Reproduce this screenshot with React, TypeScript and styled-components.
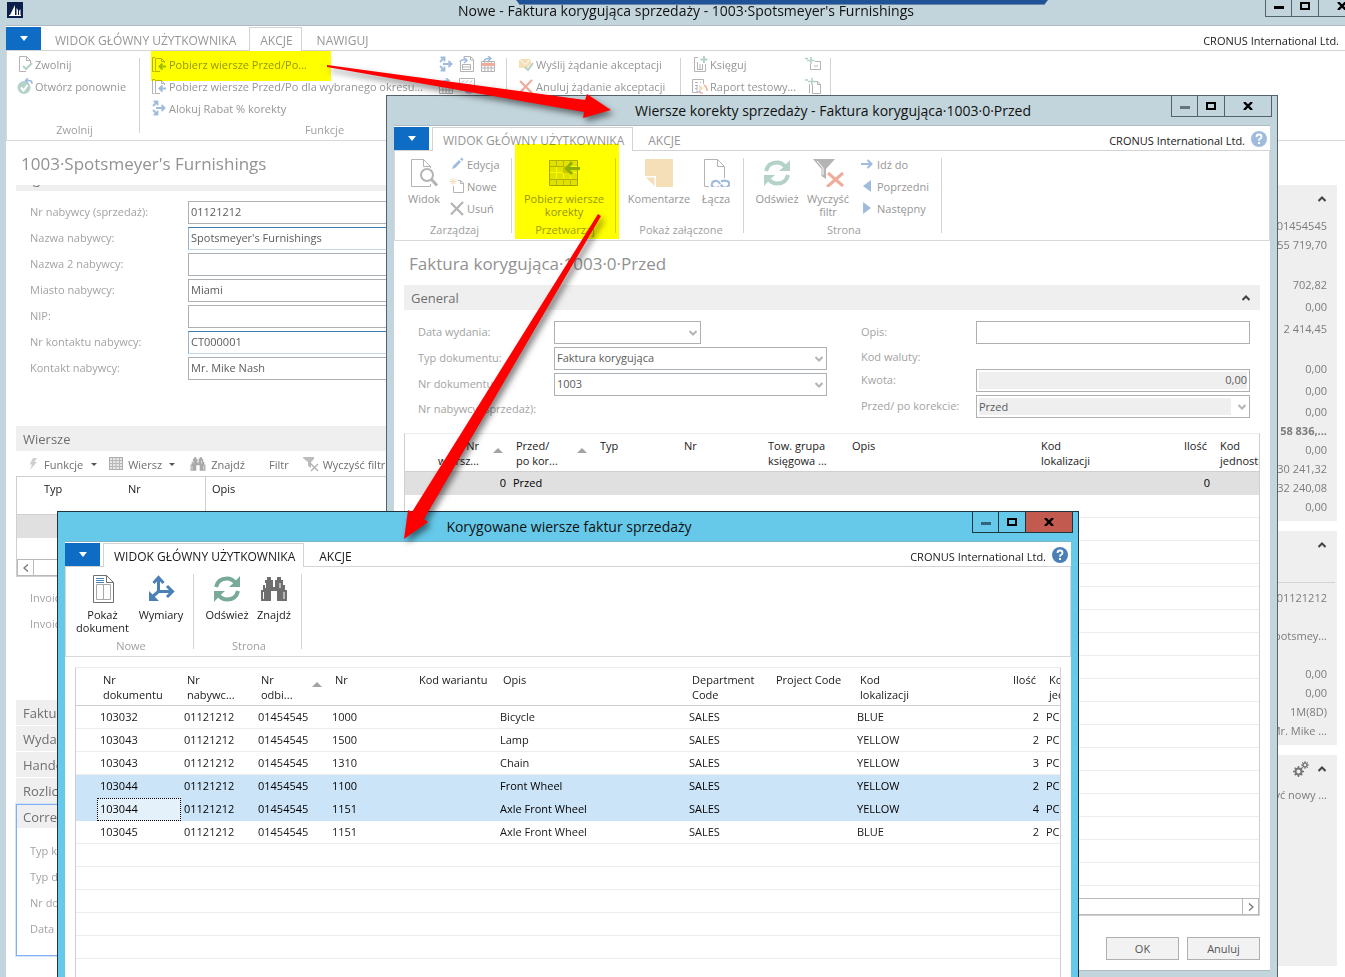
import React from 'react';
import styled, { createGlobalStyle, css } from 'styled-components';

const GlobalStyle = createGlobalStyle`
  *, *::before, *::after { box-sizing: border-box; }
  body { margin: 0; background: #fff; }
  body, button, input, select, table {
    font-family: 'Open Sans', 'Noto Sans', sans-serif;
    font-size: 11px;
    line-height: 15px;
  }
  button { background: none; border: 0; padding: 0; color: inherit; text-align: inherit; }
  h1, h2, p, ul { margin: 0; padding: 0; font-weight: 400; list-style: none; }
  svg { display: block; flex: none; }
`;

/* ---------- palette ---------- */

interface Tone {
  gray: string;
  blue: string;
  green: string;
  sand: string;
  red: string;
}
const faded: Tone = { gray: '#b4b4b4', blue: '#a0bcdc', green: '#b4d2c8', sand: '#f5dfb8', red: '#efac9b' };
const vivid: Tone = { gray: '#6f6f6f', blue: '#4a7fb8', green: '#79a998', sand: '#efc477', red: '#d9593d' };

/* ---------- icons ---------- */

type IconProps = { t?: Tone };

const S = ({ w = 16, h = w, children }: { w?: number; h?: number; children: React.ReactNode }) => (
  <svg width={w} height={h} viewBox={`0 0 ${w} ${h}`} fill="none" aria-hidden="true">
    {children}
  </svg>
);

const LogoIcon = () => (
  <S>
    <rect width="16" height="16" fill="#0b1f4b" />
    <path d="M3 13 L8 3 V13 Z" fill="#fff" />
    <path d="M9.500 13 V6 L11 8 V13 Z M12 13 V9 L13.500 7 V13 Z" fill="#fff" />
    <path d="M2 13.500 H14" stroke="#fff" />
  </S>
);

const Caret = () => (
  <S w={8} h={5}>
    <path d="M0 0 H8 L4 5 Z" fill="#fff" />
  </S>
);

const MenuCaret = () => (
  <S w={8} h={3}>
    <path d="M2 0 H8 L5 3 Z" fill="#555" />
  </S>
);

const DocCheckIcon = ({ t = faded }: IconProps) => (
  <S>
    <path d="M9 15.500 H2.500 V0.500 H9.500 L13.500 4.500 V7 M9.500 0.500 V4.500 H13.500" stroke={t.gray} />
    <path d="M6 10 L9 13 L15 7" stroke={t.green} strokeWidth="2" />
  </S>
);

const ReopenIcon = ({ t = faded }: IconProps) => (
  <S>
    <circle cx="7" cy="9.500" r="6.500" fill={t.green} />
    <path d="M4 9.500 L6.500 12.500 L10.500 7" stroke="#fff" strokeWidth="2" />
    <path d="M9 2.500 H12.500 Q15 2.500 15 6 M11 0 L8.500 2.500 L11 5" stroke={t.blue} strokeWidth="1.500" />
  </S>
);

const GetLinesIcon = ({ t = faded }: IconProps) => (
  <S>
    <path d="M3.500 15.500 H1.500 V1.500 H4" stroke={t.gray} />
    <path d="M9 15.500 H4.500 V2.500 H10.500 L13.500 5.500 V7 M10.500 2.500 V5.500 H13.500" stroke={t.gray} />
    <path d="M15 10.500 H9.500 M11.500 7.500 L8.500 10.500 L11.500 13.500" stroke={t.blue} strokeWidth="2" />
  </S>
);

const AllocateIcon = ({ t = faded }: IconProps) => (
  <S>
    <path
      d="M2.500 1.500 H6.500 V5.500 M6.500 1.500 L2 6 M5 8 H13 M10.500 5 L13.500 8 L10.500 11 M2 10 L6 14 M6.500 10.500 V14.500 H2.500"
      stroke={t.blue}
      strokeWidth="1.800"
    />
  </S>
);

const CopyDocIcon = ({ t = faded }: IconProps) => (
  <S>
    <path d="M1.500 5 V15.500 H11.500 M5 2.500 V0.500 H11.500 L14.500 3.500 V15.500 H11 M11.500 1 V4 H14" stroke={t.gray} />
    <path d="M3.500 8.500 H11.500 V13.500 H3.500 Z M4 11 H11" stroke={t.gray} />
    <path d="M1 6 Q2 3 7 4 M5 1.500 L8 4.500 L5 7" stroke={t.blue} strokeWidth="1.500" />
  </S>
);

const CalendarIcon = ({ t = faded, accent }: IconProps & { accent?: string }) => (
  <S>
    <path d="M1.500 5.500 H14.500 V15.500 H1.500 Z M4.800 6 V15 M8 6 V15 M11.200 6 V15 M2 8.500 H14 M2 12 H14" stroke={t.gray} />
    {accent && <rect x="1" y="7" width="14" height="3" fill={accent} />}
    <path d="M4 5 Q5 2 10 2.500 M8 0 L11 2.500 L8 5" stroke={t.blue} strokeWidth="1.500" />
  </S>
);

const PeriodIcon = ({ t = faded }: IconProps) => (
  <S>
    <path d="M0.500 0.500 H15.500 V12 M0.500 0.500 V12 H5 M3 4.500 L5 2.500 M7 4.500 L9 2.500 M11 4.500 L13 2.500" stroke={t.gray} />
    <circle cx="10" cy="11" r="5" fill="#c9b6dc" />
  </S>
);

const SendApprovalIcon = ({ t = faded }: IconProps) => (
  <S>
    <path d="M1 3 H13 V8 L9 12 H1 Z" fill={t.sand} />
    <path d="M1 3 L7 8.500 L13 3" stroke="#fff" />
    <path d="M7 11 L10 14 L15 7" stroke={t.green} strokeWidth="2" />
  </S>
);

const CrossIcon = ({ color = faded.gray }: { color?: string }) => (
  <S>
    <path d="M2 3 L14 15 M14 2 L2 14.500" stroke={color} strokeWidth="2.200" />
  </S>
);

const LedgerIcon = ({ t = faded }: IconProps) => (
  <S>
    <path d="M6 1.500 H2.500 V15.500 H13.500 V8 M5.500 6 V13 M8 13 V8 M10.500 8 V13 M5 13.500 H11" stroke={t.gray} />
    <path d="M12 0 V7 M8.500 3.500 H15.500" stroke={t.green} strokeWidth="2" />
  </S>
);

const TestReportIcon = ({ t = faded }: IconProps) => (
  <S>
    <path d="M6 14.500 H0.500 V1.500 H11.500 V6 M3 4.500 H6 M3 7.500 H6 M3 10.500 H5 M8 4.500 H9" stroke={t.gray} />
    <path d="M7 7 L12 10 L7 14 Z" fill={t.sand} />
    <path d="M12 7 Q15.500 9 15 13 M11 15 Q8 15.500 7 13" stroke={t.red} strokeWidth="1.400" />
    <path d="M5 8 V14 H9" stroke={t.blue} />
  </S>
);

const PostSendIcon = ({ t = faded }: IconProps) => (
  <S>
    <path d="M5.500 8 V13.500 H15.500 V5.500 H10 M9 10 H13" stroke={t.gray} />
    <path d="M6 1 V8 M2 4.500 H9.500 M0 2.500 H3" stroke={t.green} strokeWidth="1.600" />
  </S>
);

const PostNewIcon = ({ t = faded }: IconProps) => (
  <S>
    <path d="M4.500 6 V15 M7.500 7 V15.500 H15.500 V6 L12.500 3.500 H10 M12.500 4 V6.500 H15" stroke={t.gray} />
    <path d="M7 0 V7 M3 3.500 H10.500 M0 2 H3" stroke={t.green} strokeWidth="1.600" />
  </S>
);

const ViewIcon = ({ t = faded }: IconProps) => (
  <S w={28}>
    <path d="M20.500 25 V27.500 H1.500 V0.500 H13.500 L20.500 7.500 V9 M13.500 0.500 V7.500 H20.500" stroke={t.gray} />
    <circle cx="17" cy="16" r="6" stroke={t.gray} strokeWidth="2" />
    <path d="M21 20 L27 26.500" stroke={t.gray} strokeWidth="3" />
  </S>
);

const PencilIcon = ({ t = faded }: IconProps) => (
  <S>
    <path d="M3 13 L4 10 L10 4 L12 6 L6 12 Z M11 3 L12.500 1.500 L14.500 3.500 L13 5 Z" fill={t.blue} />
  </S>
);

const NewIcon = ({ t = faded }: IconProps) => (
  <S>
    <path d="M4.500 8 V14.500 H14.500 V5 L11.500 2.500 H9 M11.500 3 V5.500 H14" stroke={t.gray} />
    <path d="M4 0 V7 M0.500 3.500 H7.500 M1.500 1 L6.500 6 M6.500 1 L1.500 6" stroke={t.sand} />
  </S>
);

const GetCorrectionIcon = () => (
  <S w={32} h={28}>
    <path d="M1.500 1.500 H29.500 V26.500 H1.500 Z" fill="#e2e2e2" stroke="#a4a4a4" />
    <path d="M8.500 2 V26 M15.500 2 V26 M22.500 2 V26 M2 7.500 H29 M2 13.500 H29 M2 20.500 H29" stroke="#fbfbfb" />
    <path d="M1.500 1.500 H29.500 M1.500 7.500 H16 M22.500 2 V7 M15.500 2 V7 M8.500 2 V7 M1.500 20.500 H29 M8.500 21 V26 M15.500 21 V26 M22.500 21 V26" stroke="#b4b4b4" />
    <path d="M15 7 H22 L18 10 L22 14 H15 Z" fill="#c9c9c9" />
    <path d="M32 9.500 H19 M24 3.500 L18.500 9.500 L24 15" stroke="#8fb0a4" strokeWidth="3" />
  </S>
);

const NoteIcon = ({ t = faded }: IconProps) => (
  <S w={28}>
    <path d="M0 0 H28 V28 H11 V17 H0 Z" fill={t.sand} />
    <path d="M1 18.500 H9.500 V27 Z" fill={t.sand} />
  </S>
);

const LinksIcon = ({ t = faded }: IconProps) => (
  <S w={28}>
    <path d="M7 27.500 H2.500 V0.500 H15.500 L22.500 7.500 V19 M15.500 0.500 V7.500 H22.500" stroke={t.gray} />
    <path
      d="M17 27.500 Q15 30 12 28.500 Q9 27.500 10 24.500 Q11 21.500 15 22 Q17 22.500 18 25 M19 22.500 Q22 21 25 22 Q28 23 27 26 Q26 29 22 28.500 Q20 28 19 25.500"
      stroke={t.blue}
      strokeWidth="2.200"
    />
  </S>
);

const RefreshIcon = ({ t = faded }: IconProps) => (
  <S w={28}>
    <path d="M3 12 Q5 3.500 14 3.500 Q19 3.500 22.500 8" stroke={t.green} strokeWidth="4" />
    <path d="M27 1 V12 H16 L20.500 8 Z" fill={t.green} />
    <path d="M25 16 Q23 24.500 14 24.500 Q9 24.500 5.500 20" stroke={t.green} strokeWidth="4" />
    <path d="M1 27 V16 H12 L7.500 20 Z" fill={t.green} />
  </S>
);

const ClearFilterIcon = ({ t = faded }: IconProps) => (
  <S w={32} h={28}>
    <path d="M1 0 H23 L14 10 V20 L9.500 17 V10 Z" fill={t.gray} />
    <path d="M5 2 L11 9 V16" stroke="#fff" />
    <path d="M16 14 L31 27 M31 14 L15 28" stroke={t.red} strokeWidth="3" />
  </S>
);

const ArrowRightIcon = ({ t = faded }: IconProps) => (
  <S>
    <path d="M2 8 H12 M8.500 4 L12.500 8 L8.500 12" stroke={t.blue} strokeWidth="2" />
  </S>
);
const PreviousIcon = ({ t = faded }: IconProps) => (
  <S>
    <path d="M12 2 V14 L4 8 Z" fill={t.blue} />
  </S>
);
const NextIcon = ({ t = faded }: IconProps) => (
  <S>
    <path d="M4 2 V14 L12 8 Z" fill={t.blue} />
  </S>
);

const ShowDocIcon = ({ t = vivid }: IconProps) => (
  <S w={24} h={28}>
    <path d="M2.500 0.500 H15.500 L22.500 7.500 V27.500 H2.500 Z M15.500 0.500 V7.500 H22.500" stroke={t.gray} />
    <path d="M5.500 9.500 H19.500 V24.500 H5.500 Z M12.500 10 V24" stroke="#a8a8a8" />
    <path d="M5 3.500 H13 M5 5.500 H13 M5 7.500 H13" stroke={t.blue} />
  </S>
);

const DimensionsIcon = ({ t = vivid }: IconProps) => (
  <S w={28}>
    <path d="M11.500 17 V4 M6.500 8 L11.500 2.500 L16.500 8 M11 16.500 H25 M20 11 L25.500 16.500 L20 22 M12 16 L4 23" stroke={t.blue} strokeWidth="3" />
    <path d="M2 16 V26 H12 Z" fill={t.blue} />
  </S>
);

const BinocularsIcon = ({ size = 28, color = vivid.gray }: { size?: number; color?: string }) => (
  <svg width={size} height={size} viewBox="0 0 28 28" aria-hidden="true">
    <path
      d="M7 2 H11 V5 H13 V12 H15 V5 H17 V2 H21 V5 H23 V10 H25 V15 H27 V26 H17 V16 H11 V26 H1 V15 H3 V10 H5 V5 H7 Z"
      fill={color}
    />
    <path d="M5.500 8 V13 M3.500 17 V24 M20 8 V13 M24 17 V24" stroke="#fff" strokeWidth="1" />
  </svg>
);

const HelpIcon = ({ color }: { color: string }) => (
  <S>
    <circle cx="8" cy="8" r="8" fill={color} />
    <path d="M5.500 6 Q5.500 3.500 8 3.500 Q10.500 3.500 10.500 5.700 Q10.500 7 9 7.800 Q8 8.400 8 9.800" stroke="#fff" strokeWidth="1.800" />
    <rect x="7" y="11" width="2" height="2" fill="#fff" />
  </S>
);

const BoltIcon = () => (
  <S w={10} h={14}>
    <path d="M5 1 H9 L6.500 5 H9 L2 13 L4 7.500 H1.500 Z" fill="#cfcfcf" />
  </S>
);

const GridIcon = () => (
  <S w={14}>
    <rect x="0.500" y="0.500" width="13" height="12" fill="#e6e6e6" stroke="#adadad" />
    <path d="M3.500 1 V12 M7 1 V12 M10.500 1 V12 M1 3.500 H13 M1 6.500 H13 M1 9.500 H13" stroke="#b8b8b8" />
  </S>
);

const FilterClearSmallIcon = () => (
  <S>
    <path d="M0 1 H11 V3 L8 6 V12 L5 10 V6 L0 2 Z" fill="#bcbcbc" />
    <path d="M7 7 L15 15 M15 8 L8 15" stroke="#b0b0b0" strokeWidth="1.400" />
  </S>
);

const ChevronUpIcon = () => (
  <S w={8} h={6}>
    <path d="M0.500 5 L4 1.500 L7.500 5" stroke="#444" strokeWidth="2" />
  </S>
);
const ChevronDownIcon = () => (
  <S w={8} h={6}>
    <path d="M0.500 1 L4 4.500 L7.500 1" stroke="#b5b5b5" strokeWidth="2" />
  </S>
);
const ScrollArrow = ({ left }: { left?: boolean }) => (
  <S w={6} h={8}>
    <path d={left ? 'M5 0.500 L1 4 L5 7.500' : 'M1 0.500 L5 4 L1 7.500'} stroke="#777" strokeWidth="1.300" />
  </S>
);
const SortIcon = () => (
  <S w={10} h={5}>
    <path d="M0 5 L5 0 L10 5 Z" fill="#a3a3a3" />
  </S>
);

const GearsIcon = () => (
  <S w={16}>
    <circle cx="5.500" cy="10.500" r="3" stroke="#777" strokeWidth="2" />
    <path d="M5.500 5 V8 M5.500 13 V16 M0 10.500 H3 M8 10.500 H11 M1.700 6.700 L3.500 8.500 M7.500 12.500 L9.300 14.300 M9.300 6.700 L7.500 8.500 M3.500 12.500 L1.700 14.300" stroke="#777" strokeWidth="1.500" />
    <circle cx="12" cy="4" r="2" stroke="#777" strokeWidth="1.500" />
    <path d="M12 0 V2 M12 6 V8 M8 4 H10 M14 4 H16 M9.200 1.200 L10.500 2.500 M13.500 5.500 L14.800 6.800 M14.800 1.200 L13.500 2.500 M10.500 5.500 L9.200 6.800" stroke="#777" />
  </S>
);

/* ---------- window chrome ---------- */

const Desktop = styled.div`
  position: relative;
  height: 100vh;
  overflow: hidden;
  background: #fff;
`;

const WindowFrame = styled.section<{ $active?: boolean; $top: number; $left: number; $right: number; $bottom: number }>`
  position: absolute;
  top: ${(p) => p.$top}px;
  left: ${(p) => p.$left}px;
  right: ${(p) => p.$right}px;
  bottom: ${(p) => p.$bottom}px;
  display: flex;
  flex-direction: column;
  padding: 0 7px 7px;
  border: 1px solid ${(p) => (p.$active ? '#1d3540' : '#56626a')};
  background: ${(p) => (p.$active ? '#66c9ea' : '#c3d5dc')};
  color: ${(p) => (p.$active ? '#1a1a1a' : '#969696')};
`;

const TitleBar = styled.header`
  display: grid;
  grid-template-columns: 102px 1fr 102px;
  flex: none;
  height: 29px;
  margin-right: -2px;
`;

const TitleLogo = styled.span`
  padding: 6px 0 0 1px;
`;

const WindowTitle = styled.h1`
  grid-column: 2;
  font-size: 14px;
  line-height: 30px;
  color: #111;
  text-align: center;
  white-space: nowrap;
`;

const WindowControls = styled.div`
  display: flex;
  justify-content: flex-end;
  height: 21px;
`;

const ControlButton = styled.button<{ $active?: boolean; $close?: boolean }>`
  display: flex;
  align-items: center;
  justify-content: center;
  width: ${(p) => (p.$close ? 47 : 27)}px;
  border: 1px solid ${(p) => (p.$active ? '#1d3540' : '#56626a')};
  border-top: 0;
  background: ${(p) => (p.$active && p.$close ? '#c25a50' : 'transparent')};
  & + & { border-left: 0; }
`;

const WindowBody = styled.div<{ $active?: boolean }>`
  display: flex;
  flex: 1;
  flex-direction: column;
  min-height: 0;
  border-top: 1px solid ${(p) => (p.$active ? '#7fb4c6' : '#aebbc1')};
  background: #fff;
`;

const TabStrip = styled.nav`
  display: flex;
  flex: none;
  gap: 4px;
  height: 25px;
  padding: 1px 3px 0 0;
  box-shadow: inset 0 -1px #d3d3d3;
`;

const AppMenuButton = styled.button`
  display: flex;
  align-items: center;
  justify-content: center;
  width: 35px;
  height: 23px;
  margin-right: -1px;
  background: #0f6cc5;
`;

const Tab = styled.button<{ $selected?: boolean }>`
  padding: 2px 8px 0 10px;
  border: 1px solid transparent;
  border-bottom: 0;
  font-size: 12px;
  white-space: nowrap;
  ${(p) => p.$selected && css`
    border-color: #d3d3d3;
    background: #fff;
  `}
`;

const Company = styled.span`
  display: flex;
  gap: 6px;
  margin-left: auto;
  padding-top: 4px;
  line-height: 20px;
  color: #1a1a1a;
  white-space: nowrap;
`;

const Ribbon = styled.div`
  display: flex;
  flex: none;
  height: 90px;
  border: 1px solid #d8d8d8;
  border-top: 0;
`;

const RibbonSeparator = styled.span`
  width: 1px;
  margin: 7px 0;
  background: #d3d3d3;
`;

const RibbonGroupBox = styled.div<{ $width: number }>`
  display: flex;
  flex-direction: column;
  width: ${(p) => p.$width}px;
`;

const RibbonItems = styled.div`
  display: flex;
  gap: 2px;
  height: 71px;
  padding: 2px 0 0 9px;
`;

const RibbonCaption = styled.span`
  padding-left: 3px;
  line-height: 16px;
  color: #a0a0a0;
  text-align: center;
`;

const RibbonColumn = styled.div<{ $width?: number; $indent?: number }>`
  width: ${(p) => (p.$width ? `${p.$width}px` : 'auto')};
  margin-left: ${(p) => p.$indent ?? 0}px;
`;

const RibbonRow = styled.div`
  display: flex;
  gap: 5px;
`;

const SmallButton = styled.button`
  display: flex;
  align-items: center;
  gap: 2px;
  height: 22px;
  white-space: nowrap;
`;

const LargeButton = styled.button<{ $width: number }>`
  display: flex;
  flex-direction: column;
  align-items: center;
  gap: 5px;
  width: ${(p) => p.$width}px;
  padding-top: 6px;
  line-height: 13px;
  text-align: center;
`;

interface WindowProps {
  title: string;
  active?: boolean;
  logo?: boolean;
  top: number;
  left: number;
  right: number;
  bottom: number;
  tabs: string[];
  selected: number;
  ribbon: React.ReactNode;
  children: React.ReactNode;
}

const Window = ({ title, active, logo, top, left, right, bottom, tabs, selected, ribbon, children }: WindowProps) => (
  <WindowFrame $active={active} $top={top} $left={left} $right={right} $bottom={bottom} aria-label={title}>
    <TitleBar>
      {logo && <TitleLogo><LogoIcon /></TitleLogo>}
      <WindowTitle>{title}</WindowTitle>
      <WindowControls>
        <ControlButton $active={active} aria-label="Minimalizuj">
          <S w={10} h={8}><rect y="4" width="10" height="3" fill={logo ? '#000' : active ? '#33667a' : '#69747a'} /></S>
        </ControlButton>
        <ControlButton $active={active} aria-label="Maksymalizuj">
          <S w={10} h={8}><rect x="1" y="1" width="8" height="6" stroke="#000" strokeWidth="2" /></S>
        </ControlButton>
        <ControlButton $active={active} $close aria-label="Zamknij">
          <S w={10} h={8}><path d="M1 0 L9 8 M9 0 L1 8" stroke="#000" strokeWidth="2.400" /></S>
        </ControlButton>
      </WindowControls>
    </TitleBar>
    <WindowBody $active={active}>
      <TabStrip>
        <AppMenuButton aria-label="Menu aplikacji"><Caret /></AppMenuButton>
        {tabs.map((tab, i) => (
          <Tab key={tab} $selected={i === selected}>{tab}</Tab>
        ))}
        <Company>
          CRONUS International Ltd.
          <HelpIcon color={active ? vivid.blue : faded.blue} />
        </Company>
      </TabStrip>
      <Ribbon>{ribbon}</Ribbon>
      {children}
    </WindowBody>
  </WindowFrame>
);

const RibbonGroup = ({ caption, width, children }: { caption: string; width: number; children: React.ReactNode }) => (
  <>
    <RibbonGroupBox $width={width}>
      <RibbonItems>{children}</RibbonItems>
      <RibbonCaption>{caption}</RibbonCaption>
    </RibbonGroupBox>
    <RibbonSeparator />
  </>
);

/* ---------- page parts ---------- */

const PageTitle = styled.h2`
  padding: 11px 0 9px 5px;
  font-size: 17px;
  line-height: 24px;
  color: #929292;
  white-space: nowrap;
`;

const SectionBar = styled.h2`
  display: flex;
  align-items: center;
  justify-content: space-between;
  flex: none;
  height: 25px;
  padding: 1px 10px 0 7px;
  background: #efefef;
  font-size: 13px;
  color: #6f6f6f;
  white-space: nowrap;
`;

const FieldList = styled.div<{ $label: number }>`
  display: grid;
  grid-template-columns: ${(p) => p.$label}px minmax(0, 1fr);
  row-gap: 3px;
  align-content: start;
`;

const FieldLabel = styled.label<{ $plain?: boolean }>`
  height: ${(p) => (p.$plain ? 19 : 23)}px;
  line-height: ${(p) => (p.$plain ? 20 : 22)}px;
  color: #a3a3a3;
  white-space: nowrap;
`;

const fieldBox = css`
  width: 100%;
  height: 23px;
  padding: 1px 2px 3px;
  border: 1px solid #adb1b3;
  border-radius: 0;
  background: #fff;
  color: #5c5c5c;
  outline: 0;
`;

const TextBox = styled.input<{ $lookup?: boolean }>`
  ${fieldBox}
  ${(p) => p.$lookup && css`border-color: #3f7cae #c5d9e8 #c5d9e8 #8fb4d3;`}
  &:read-only {
    background: #efefef;
    box-shadow: inset 0 0 0 2px #fff;
    text-align: right;
  }
`;

const SelectWrap = styled.span<{ $width?: number }>`
  display: grid;
  width: ${(p) => (p.$width ? `${p.$width}px` : '100%')};
  > * { grid-area: 1 / 1; }
  > svg { align-self: center; justify-self: end; margin-right: 4px; pointer-events: none; }
`;

const SelectBox = styled.select`
  ${fieldBox}
  appearance: none;
  opacity: 1;
  &:disabled {
    padding: 2px 18px 2px 2px;
    background: #efefef content-box;
    background-clip: content-box;
  }
`;

const GridFrame = styled.div`
  display: flex;
  flex: 1;
  flex-direction: column;
  min-height: 0;
  overflow: hidden;
  border: 1px solid #cfcfcf;
  border-top-color: #ececec;
`;

const GridTable = styled.table`
  width: 100%;
  table-layout: fixed;
  border-collapse: separate;
  border-spacing: 0;
  color: #1a1a1a;
`;

const HeadCell = styled.th<{ $num?: boolean; $ruled?: boolean }>`
  height: 38px;
  padding: 4px 0 3px 6px;
  overflow: hidden;
  border-bottom: 1px solid #cfcfcf;
  ${(p) => p.$ruled && 'border-right: 1px solid #cfcfcf;'}
  font-weight: 400;
  text-align: ${(p) => (p.$num ? 'right' : 'left')};
  padding-right: ${(p) => (p.$num ? 7 : 0)}px;
  vertical-align: top;
  white-space: nowrap;
`;

const SortedHead = styled.span<{ $num?: boolean }>`
  display: flex;
  align-items: center;
  justify-content: ${(p) => (p.$num ? 'flex-end' : 'space-between')};
  gap: 14px;
  margin-right: ${(p) => (p.$num ? 0 : 7)}px;
  svg { margin-bottom: 6px; }
`;

const Row = styled.tr<{ $tone?: 'selected' | 'current' }>`
  background: ${(p) => (p.$tone === 'selected' ? '#cce4f7' : p.$tone === 'current' ? '#e0e0e0' : '#fff')};
  td { ${(p) => p.$tone && 'border-bottom-color: transparent; color: #000;'} }
`;

const Cell = styled.td<{ $num?: boolean; $focus?: boolean }>`
  height: 23px;
  padding: 0 3px;
  overflow: hidden;
  border-bottom: 1px solid #ececec;
  line-height: 20px;
  text-align: ${(p) => (p.$num ? 'right' : 'left')};
  padding-right: ${(p) => (p.$num ? 4 : 0)}px;
  white-space: nowrap;
  ${(p) => p.$focus && css`
    background: #e5f1fa;
    outline: 1px dotted #000;
    outline-offset: -1px;
  `}
`;

const EmptyRows = styled.div`
  flex: 1;
  background: repeating-linear-gradient(#fff 0 22px, #ececec 22px 23px);
`;

const ScrollBar = styled.div<{ $end?: boolean }>`
  display: flex;
  justify-content: ${(p) => (p.$end ? 'flex-end' : 'flex-start')};
  flex: none;
  height: 17px;
  border: 1px solid #b9b9b9;
  background: #fff;
`;

const ScrollButton = styled.button<{ $end?: boolean }>`
  display: flex;
  align-items: center;
  justify-content: center;
  width: 16px;
  border: solid #b9b9b9;
  border-width: ${(p) => (p.$end ? '0 0 0 1px' : '0 1px 0 0')};
`;

/* ---------- main window ---------- */

const MainContent = styled.div`
  display: flex;
  flex: 1;
  gap: 10px;
  min-height: 0;
  padding: 0 27px 0 10px;
`;

const FormPane = styled.div`
  flex: 1;
  min-width: 0;
`;

const ScrolledBar = styled.div`
  display: flex;
  flex-direction: column;
  justify-content: flex-end;
  height: 6px;
  overflow: hidden;
`;

const MainFields = styled.div<{ $top: number; $bottom: number }>`
  padding: ${(p) => p.$top}px 14px ${(p) => p.$bottom}px;
`;

const LineToolbar = styled.div`
  display: flex;
  align-items: center;
  height: 25px;
  padding: 1px 0 0 12px;
  color: #6f6f6f;
`;

const ToolButton = styled.button<{ $after: number; $gap?: number }>`
  display: flex;
  align-items: center;
  gap: ${(p) => p.$gap ?? 6}px;
  margin-right: ${(p) => p.$after}px;
  white-space: nowrap;
`;

const LinesFrame = styled.div`
  margin-bottom: 10px;
  border: 1px solid #cfcfcf;
`;

const BlankLine = styled.div`
  height: 21px;
`;

const FastTabs = styled.div`
  display: grid;
  gap: 1px;
  margin-bottom: 1px;
`;

const FocusedTab = styled.div`
  border: 1px solid #7fb0f5;
  box-shadow: 0 0 0 1px #d3e4fb;
  ${SectionBar} { height: 23px; padding-left: 6px; }
  ${MainFields} { padding-left: 13px; }
`;

const FactPane = styled.aside`
  display: grid;
  flex: none;
  align-content: start;
  gap: 10px;
  width: 200px;
  padding-top: 44px;
`;

const FactBox = styled.section<{ $height: number }>`
  min-height: ${(p) => p.$height}px;
  padding-right: 10px;
  background: #efefef;
  color: #7c7c7c;
`;

const FactHead = styled.header<{ $height: number; $ruled?: boolean }>`
  display: flex;
  align-items: flex-start;
  justify-content: flex-end;
  gap: 9px;
  height: ${(p) => p.$height}px;
  padding: 5px 1px 0 0;
  margin-right: ${(p) => (p.$ruled ? -8 : 0)}px;
  ${(p) => p.$ruled && css`padding-right: 9px; border-bottom: 1px solid #d3d3d3; margin-bottom: 5px;`}
  button { display: flex; align-items: center; height: 17px; }
`;

const FactRow = styled.li<{ $tall?: boolean; $bold?: boolean }>`
  height: ${(p) => (p.$tall ? 22 : 19)}px;
  line-height: ${(p) => (p.$tall ? 22 : 19)}px;
  font-weight: ${(p) => (p.$bold ? 700 : 400)};
  text-align: right;
  white-space: nowrap;
`;

const FactGap = styled.li<{ $height: number }>`
  height: ${(p) => p.$height}px;
`;

const customerFields: { label: string; value: string; lookup?: boolean }[] = [
  { label: 'Nr nabywcy (sprzedaż):', value: '01121212' },
  { label: 'Nazwa nabywcy:', value: "Spotsmeyer's Furnishings", lookup: true },
  { label: 'Nazwa 2 nabywcy:', value: '' },
  { label: 'Miasto nabywcy:', value: 'Miami' },
  { label: 'NIP:', value: '' },
  { label: 'Nr kontaktu nabywcy:', value: 'CT000001', lookup: true },
  { label: 'Kontakt nabywcy:', value: 'Mr. Mike Nash' },
];

const Fields = ({ items, prefix, label }: { items: { label: string; value: string; lookup?: boolean }[]; prefix: string; label: number }) => (
  <FieldList $label={label}>
    {items.map((f, i) => (
      <React.Fragment key={f.label + i}>
        <FieldLabel htmlFor={`${prefix}${i}`}>{f.label}</FieldLabel>
        <TextBox id={`${prefix}${i}`} defaultValue={f.value} $lookup={f.lookup} />
      </React.Fragment>
    ))}
  </FieldList>
);

const blank = (labels: string[]) => labels.map((label) => ({ label, value: '' }));

const MainWindow = () => (
  <Window
    logo
    title="Nowe - Faktura korygująca sprzedaży - 1003·Spotsmeyer's Furnishings"
    top={-5}
    left={-2}
    right={-27}
    bottom={-30}
    tabs={['WIDOK GŁÓWNY UŻYTKOWNIKA', 'AKCJE', 'NAWIGUJ']}
    selected={1}
    ribbon={
      <>
        <RibbonGroup caption="Zwolnij" width={132}>
          <RibbonColumn $indent={1}>
            <SmallButton><DocCheckIcon />Zwolnij</SmallButton>
            <SmallButton><ReopenIcon />Otwórz ponownie</SmallButton>
          </RibbonColumn>
        </RibbonGroup>
        <RibbonGroup caption="Funkcje" width={366}>
          <RibbonColumn $width={285} $indent={2}>
            <SmallButton><GetLinesIcon />Pobierz wiersze Przed/Po...</SmallButton>
            <SmallButton><GetLinesIcon />Pobierz wiersze Przed/Po dla wybranego okresu...</SmallButton>
            <SmallButton><AllocateIcon />Alokuj Rabat % korekty</SmallButton>
          </RibbonColumn>
          <RibbonColumn>
            <RibbonRow>
              <SmallButton aria-label="Alokuj"><AllocateIcon /></SmallButton>
              <SmallButton aria-label="Kopiuj dokument"><CopyDocIcon /></SmallButton>
              <SmallButton aria-label="Kalendarz"><CalendarIcon accent={faded.red} /></SmallButton>
            </RibbonRow>
            <RibbonRow>
              <SmallButton aria-label="Harmonogram"><CalendarIcon /></SmallButton>
              <SmallButton aria-label="Okres"><PeriodIcon /></SmallButton>
            </RibbonRow>
          </RibbonColumn>
        </RibbonGroup>
        <RibbonGroup caption="Akceptacja" width={173}>
          <RibbonColumn $indent={2}>
            <SmallButton><SendApprovalIcon />Wyślij żądanie akceptacji</SmallButton>
            <SmallButton><CrossIcon color={faded.red} />Anuluj żądanie akceptacji</SmallButton>
          </RibbonColumn>
        </RibbonGroup>
        <RibbonGroup caption="Księgowanie" width={149}>
          <RibbonColumn $width={111} $indent={2}>
            <SmallButton><LedgerIcon />Księguj</SmallButton>
            <SmallButton><TestReportIcon />Raport testowy...</SmallButton>
          </RibbonColumn>
          <RibbonColumn>
            <SmallButton aria-label="Księguj i wyślij"><PostSendIcon /></SmallButton>
            <SmallButton aria-label="Księguj i nowy"><PostNewIcon /></SmallButton>
          </RibbonColumn>
        </RibbonGroup>
      </>
    }
  >
    <MainContent>
      <FormPane>
        <PageTitle>1003·Spotsmeyer's Furnishings</PageTitle>
        <ScrolledBar><SectionBar>Ogólne</SectionBar></ScrolledBar>
        <MainFields $top={10} $bottom={46}>
          <Fields items={customerFields} prefix="customer" label={158} />
        </MainFields>
        <SectionBar>Wiersze</SectionBar>
        <LineToolbar>
          <ToolButton $after={12}><BoltIcon />Funkcje<MenuCaret /></ToolButton>
          <ToolButton $after={15} $gap={5}><GridIcon />Wiersz<MenuCaret /></ToolButton>
          <ToolButton $after={24} $gap={5}><BinocularsIcon size={16} color="#a9a9a9" />Znajdź</ToolButton>
          <ToolButton $after={14}>Filtr</ToolButton>
          <ToolButton $after={0} $gap={4}><FilterClearSmallIcon />Wyczyść filtr</ToolButton>
        </LineToolbar>
        <LinesFrame>
          <GridTable>
            <colgroup><col width="21" /><col width="84" /><col width="84" /><col /></colgroup>
            <thead>
              <tr><HeadCell /><HeadCell>Typ</HeadCell><HeadCell $ruled>Nr</HeadCell><HeadCell>Opis</HeadCell></tr>
            </thead>
            <tbody>
              <Row $tone="current"><Cell /><Cell /><Cell /><Cell /></Row>
            </tbody>
          </GridTable>
          <BlankLine />
          <ScrollBar><ScrollButton aria-label="Przewiń w lewo"><ScrollArrow left /></ScrollButton></ScrollBar>
        </LinesFrame>
        <MainFields $top={0} $bottom={64}>
          <Fields items={blank(['Invoice Discount:', 'Invoice Total:'])} prefix="invoice" label={158} />
        </MainFields>
        <FastTabs>
          {['Fakturowanie', 'Wydanie', 'Handel zagraniczny', 'Rozliczenie'].map((name) => (
            <SectionBar key={name}>{name}</SectionBar>
          ))}
        </FastTabs>
        <FocusedTab>
          <SectionBar>Correction</SectionBar>
          <MainFields $top={12} $bottom={14}>
            <Fields items={blank(['Typ korekty:', 'Typ dokumentu:', 'Nr dokumentu:', 'Data wydania:'])} prefix="correction" label={158} />
          </MainFields>
        </FocusedTab>
      </FormPane>
      <FactPane>
        <FactBox $height={336}>
          <FactHead $height={31}><button aria-label="Zwiń"><ChevronUpIcon /></button></FactHead>
          <ul>
            <FactRow>01454545</FactRow>
            <FactRow>255 719,70</FactRow>
            <FactGap $height={20} />
            <FactRow $tall>702,82</FactRow>
            <FactRow $tall>0,00</FactRow>
            <FactRow $tall>2 414,45</FactRow>
            <FactGap $height={18} />
            <FactRow $tall>0,00</FactRow>
            <FactRow $tall>0,00</FactRow>
            <FactRow>0,00</FactRow>
            <FactRow $bold>58 836,...</FactRow>
            <FactRow>0,00</FactRow>
            <FactRow>230 241,32</FactRow>
            <FactRow>32 240,08</FactRow>
            <FactRow>0,00</FactRow>
          </ul>
        </FactBox>
        <FactBox $height={214}>
          <FactHead $height={52} $ruled><button aria-label="Zwiń"><ChevronUpIcon /></button></FactHead>
          <ul>
            <FactRow>01121212</FactRow>
            <FactGap $height={19} />
            <FactRow>Spotsmey...</FactRow>
            <FactGap $height={19} />
            <FactRow>0,00</FactRow>
            <FactRow>0,00</FactRow>
            <FactRow>1M(8D)</FactRow>
            <FactRow>Mr. Mike ...</FactRow>
          </ul>
        </FactBox>
        <FactBox $height={211}>
          <FactHead $height={30}>
            <button aria-label="Ustawienia"><GearsIcon /></button>
            <button aria-label="Zwiń"><ChevronUpIcon /></button>
          </FactHead>
          <ul><FactRow>Utworzyć nowy ...</FactRow></ul>
        </FactBox>
      </FactPane>
    </MainContent>
  </Window>
);

/* ---------- correction lines window ---------- */

const DialogContent = styled.div`
  display: flex;
  flex: 1;
  flex-direction: column;
  min-height: 0;
  padding: 0 10px;
  border-bottom: 1px solid #aebbc1;
`;

const TwoColumns = styled.div`
  display: grid;
  grid-template-columns: 409px 389px;
  justify-content: space-between;
  padding: 11px 10px 15px 14px;
`;

const DialogButtons = styled.div`
  display: flex;
  justify-content: flex-end;
  gap: 8px;
  padding: 21px 0 10px;
`;

const DialogButton = styled.button`
  width: 73px;
  height: 23px;
  border: 1px solid #adb1b3;
  background: #f2f2f2;
  color: #555;
  text-align: center;
`;

const CorrectionWindow = () => (
  <Window
    title="Wiersze korekty sprzedaży - Faktura korygująca·1003·0·Przed"
    top={95}
    left={386}
    right={67}
    bottom={-2}
    tabs={['WIDOK GŁÓWNY UŻYTKOWNIKA', 'AKCJE']}
    selected={0}
    ribbon={
      <>
        <RibbonGroup caption="Zarządzaj" width={116}>
          <LargeButton $width={40}><ViewIcon />Widok</LargeButton>
          <RibbonColumn $indent={3}>
            <SmallButton><PencilIcon />Edycja</SmallButton>
            <SmallButton><NewIcon />Nowe</SmallButton>
            <SmallButton><CrossIcon />Usuń</SmallButton>
          </RibbonColumn>
        </RibbonGroup>
        <RibbonGroup caption="Przetwarzaj" width={103}>
          <LargeButton $width={86}><GetCorrectionIcon />Pobierz wiersze korekty</LargeButton>
        </RibbonGroup>
        <RibbonGroup caption="Pokaż załączone" width={127}>
          <LargeButton $width={68}><NoteIcon />Komentarze</LargeButton>
          <LargeButton $width={42}><LinksIcon />Łącza</LargeButton>
        </RibbonGroup>
        <RibbonGroup caption="Strona" width={197}>
          <LargeButton $width={48}><RefreshIcon />Odśwież</LargeButton>
          <LargeButton $width={50}><ClearFilterIcon />Wyczyść filtr</LargeButton>
          <RibbonColumn $indent={4}>
            <SmallButton><ArrowRightIcon />Idź do</SmallButton>
            <SmallButton><PreviousIcon />Poprzedni</SmallButton>
            <SmallButton><NextIcon />Następny</SmallButton>
          </RibbonColumn>
        </RibbonGroup>
      </>
    }
  >
    <DialogContent>
      <PageTitle>Faktura korygująca·1003·0·Przed</PageTitle>
      <SectionBar>General<ChevronUpIcon /></SectionBar>
      <TwoColumns>
        <FieldList $label={136}>
          <FieldLabel htmlFor="issued">Data wydania:</FieldLabel>
          <SelectWrap $width={147}><SelectBox id="issued" /><ChevronDownIcon /></SelectWrap>
          <FieldLabel htmlFor="doctype">Typ dokumentu:</FieldLabel>
          <SelectWrap><SelectBox id="doctype"><option>Faktura korygująca</option></SelectBox><ChevronDownIcon /></SelectWrap>
          <FieldLabel htmlFor="docno">Nr dokumentu:</FieldLabel>
          <SelectWrap><SelectBox id="docno"><option>1003</option></SelectBox><ChevronDownIcon /></SelectWrap>
          <FieldLabel as="span" $plain>Nr nabywcy (sprzedaż):</FieldLabel>
        </FieldList>
        <FieldList $label={115}>
          <FieldLabel htmlFor="desc">Opis:</FieldLabel>
          <TextBox id="desc" />
          <FieldLabel as="span" $plain>Kod waluty:</FieldLabel>
          <span />
          <FieldLabel htmlFor="amount">Kwota:</FieldLabel>
          <TextBox id="amount" defaultValue="0,00" readOnly />
          <FieldLabel htmlFor="phase">Przed/ po korekcie:</FieldLabel>
          <SelectWrap><SelectBox id="phase" disabled><option>Przed</option></SelectBox><ChevronDownIcon /></SelectWrap>
        </FieldList>
      </TwoColumns>
      <GridFrame>
        <GridTable>
          <colgroup>
            <col width="21" /><col width="84" /><col width="84" /><col width="84" /><col width="84" />
            <col width="84" /><col width="189" /><col width="84" /><col width="95" /><col />
          </colgroup>
          <thead>
            <tr>
              <HeadCell />
              <HeadCell $num><SortedHead $num><span>Nr<br />wiersz...</span><SortIcon /></SortedHead></HeadCell>
              <HeadCell><SortedHead><span>Przed/<br />po kor...</span><SortIcon /></SortedHead></HeadCell>
              <HeadCell>Typ</HeadCell>
              <HeadCell>Nr</HeadCell>
              <HeadCell>Tow. grupa<br />księgowa ...</HeadCell>
              <HeadCell>Opis</HeadCell>
              <HeadCell>Kod<br />lokalizacji</HeadCell>
              <HeadCell $num>Ilość</HeadCell>
              <HeadCell>Kod<br />jednostki</HeadCell>
            </tr>
          </thead>
          <tbody>
            <Row $tone="current">
              <Cell /><Cell $num>0</Cell><Cell>Przed</Cell><Cell /><Cell /><Cell /><Cell /><Cell /><Cell $num>0</Cell><Cell />
            </Row>
          </tbody>
        </GridTable>
        <EmptyRows />
        <ScrollBar $end><ScrollButton $end aria-label="Przewiń w prawo"><ScrollArrow /></ScrollButton></ScrollBar>
      </GridFrame>
      <DialogButtons>
        <DialogButton>OK</DialogButton>
        <DialogButton>Anuluj</DialogButton>
      </DialogButtons>
    </DialogContent>
  </Window>
);

/* ---------- corrected invoice lines window ---------- */

const LinesContent = styled.div`
  display: flex;
  flex: 1;
  min-height: 0;
  padding: 10px 10px 0;
`;

interface Line {
  doc: string;
  item: string;
  name: string;
  place: string;
  qty: number;
  selected?: boolean;
  focus?: boolean;
}

const lines: Line[] = [
  { doc: '103032', item: '1000', name: 'Bicycle', place: 'BLUE', qty: 2 },
  { doc: '103043', item: '1500', name: 'Lamp', place: 'YELLOW', qty: 2 },
  { doc: '103043', item: '1310', name: 'Chain', place: 'YELLOW', qty: 3 },
  { doc: '103044', item: '1100', name: 'Front Wheel', place: 'YELLOW', qty: 2, selected: true },
  { doc: '103044', item: '1151', name: 'Axle Front Wheel', place: 'YELLOW', qty: 4, selected: true, focus: true },
  { doc: '103045', item: '1151', name: 'Axle Front Wheel', place: 'BLUE', qty: 2 },
];

const InvoiceLinesWindow = () => (
  <Window
    active
    title="Korygowane wiersze faktur sprzedaży"
    top={511}
    left={57}
    right={266}
    bottom={-60}
    tabs={['WIDOK GŁÓWNY UŻYTKOWNIKA', 'AKCJE']}
    selected={0}
    ribbon={
      <>
        <RibbonGroup caption="Nowe" width={127}>
          <LargeButton $width={55}><ShowDocIcon />Pokaż dokument</LargeButton>
          <LargeButton $width={58}><DimensionsIcon />Wymiary</LargeButton>
        </RibbonGroup>
        <RibbonGroup caption="Strona" width={107}>
          <LargeButton $width={48}><RefreshIcon t={vivid} />Odśwież</LargeButton>
          <LargeButton $width={42}><BinocularsIcon />Znajdź</LargeButton>
        </RibbonGroup>
      </>
    }
  >
    <LinesContent>
      <GridFrame>
        <GridTable>
          <colgroup>
            <col width="21" /><col width="84" /><col width="74" /><col width="74" /><col width="84" />
            <col width="84" /><col width="189" /><col width="84" /><col width="84" /><col width="84" /><col width="105" /><col />
          </colgroup>
          <thead>
            <tr>
              <HeadCell />
              <HeadCell>Nr<br />dokumentu</HeadCell>
              <HeadCell>Nr<br />nabywc...</HeadCell>
              <HeadCell><SortedHead><span>Nr<br />odbi...</span><SortIcon /></SortedHead></HeadCell>
              <HeadCell>Nr</HeadCell>
              <HeadCell>Kod wariantu</HeadCell>
              <HeadCell>Opis</HeadCell>
              <HeadCell>Department<br />Code</HeadCell>
              <HeadCell>Project Code</HeadCell>
              <HeadCell>Kod<br />lokalizacji</HeadCell>
              <HeadCell $num>Ilość</HeadCell>
              <HeadCell>Kod<br />jednostki</HeadCell>
            </tr>
          </thead>
          <tbody>
            {lines.map((l, i) => (
              <Row key={i} $tone={l.selected ? 'selected' : undefined}>
                <Cell />
                <Cell $focus={l.focus}>{l.doc}</Cell>
                <Cell>01121212</Cell>
                <Cell>01454545</Cell>
                <Cell>{l.item}</Cell>
                <Cell />
                <Cell>{l.name}</Cell>
                <Cell>SALES</Cell>
                <Cell />
                <Cell>{l.place}</Cell>
                <Cell $num>{l.qty}</Cell>
                <Cell>PCS</Cell>
              </Row>
            ))}
          </tbody>
        </GridTable>
        <EmptyRows />
      </GridFrame>
    </LinesContent>
  </Window>
);

/* ---------- annotations ---------- */

const ConnectionBar = styled.div`
  position: absolute;
  top: 0;
  left: 516px;
  width: 532px;
  height: 5px;
  background: #1f5297;
  border-bottom: 1px solid #6d86a8;
  clip-path: polygon(0 0, 100% 0, calc(100% - 4px) 100%, 4px 100%);
`;

const Highlight = styled.mark<{ $x: number; $y: number; $w: number; $h: number }>`
  position: absolute;
  left: ${(p) => p.$x}px;
  top: ${(p) => p.$y}px;
  width: ${(p) => p.$w}px;
  height: ${(p) => p.$h}px;
  background: #ff0;
  mix-blend-mode: multiply;
  pointer-events: none;
`;

const Arrows = styled.svg`
  position: absolute;
  inset: 0;
  pointer-events: none;
  filter: drop-shadow(3px 4px 3px rgba(0, 0, 0, 0.5));
`;

export default function App() {
  return (
    <Desktop>
      <GlobalStyle />
      <MainWindow />
      <ConnectionBar />
      <Highlight $x={151} $y={51} $w={180} $h={30} />
      <CorrectionWindow />
      <Highlight $x={515} $y={144} $w={104} $h={95} />
      <InvoiceLinesWindow />
      <Arrows width="100%" height="100%" aria-hidden="true">
        <path d="M327 65 L585 100 L587 94 L611 110 L583 118 L584 112 L327 67 Z" fill="#f00" />
        <path d="M598 214 L601 216 L424 519 L428 522 L404 539 L408 510 L412 512 Z" fill="#f00" />
      </Arrows>
    </Desktop>
  );
}
